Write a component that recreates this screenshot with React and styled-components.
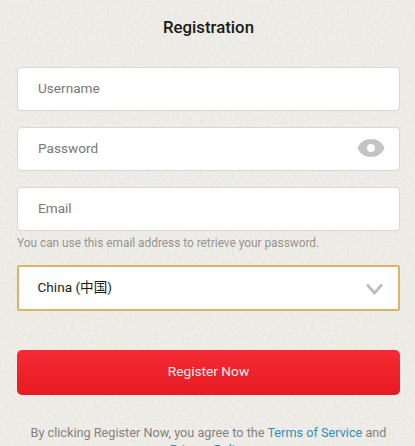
import React from "react";
import styled, { createGlobalStyle } from "styled-components";

const noise = `url("data:image/svg+xml,%3Csvg xmlns='http://www.w3.org/2000/svg' width='240' height='240'%3E%3Cfilter id='n'%3E%3CfeTurbulence type='fractalNoise' baseFrequency='0.4' numOctaves='3' seed='4'/%3E%3CfeColorMatrix values='0 0 0 0 0.55 0 0 0 0 0.53 0 0 0 0 0.48 0 0 0 0.32 -0.1'/%3E%3C/filter%3E%3Crect width='240' height='240' filter='url(%23n)'/%3E%3C/svg%3E")`;

const Global = createGlobalStyle`
  html, body { margin: 0; padding: 0; height: 100%; overflow: hidden; background: #f0eee9; }
  * { box-sizing: border-box; }
`;

const Page = styled.div`
  width: 415px;
  height: 446px;
  overflow: hidden;
  padding: 0 15px 0 17px;
  background-color: #f0eee9;
  background-image: ${noise};
  font-family: Roboto, "Noto Sans CJK SC", sans-serif;
  display: flex;
  flex-direction: column;
`;

const Title = styled.h1`
  margin: 0;
  flex: none;
  height: 67px;
  padding-top: 17px;
  font-size: 16.8px;
  line-height: 21px;
  font-weight: 500;
  color: #1a1a1a;
  text-align: center;
`;

const Field = styled.div`
  height: 44px;
  flex: none;
  display: flex;
  align-items: center;
  justify-content: space-between;
  padding: 0 14px 2px 20px;
  background: #fff;
  border: 1px solid #d8d8ce;
  border-radius: 4px;
  font-size: 13.6px;
  color: #777;
  margin-bottom: ${(p) => p.$gap || 16}px;
`;

const Hint = styled.p`
  margin: 0 0 14px;
  flex: none;
  height: 16px;
  font-size: 11.85px;
  line-height: 16px;
  color: #96948f;
`;

const Select = styled(Field)`
  height: 46px;
  margin-left: -0.5px;
  border: 2px solid #e0b264;
  border-radius: 2px;
  color: #1a1a1a;
  padding: 0 15px 4px 19px;
  margin-bottom: 39px;
`;

const Button = styled.button`
  height: 45px;
  flex: none;
  width: 100%;
  border: 0;
  padding: 0 0 4px;
  border-radius: 5px;
  background: linear-gradient(#f42b35, #e71a22);
  color: #fdeeee;
  font: 400 13.7px Roboto, sans-serif;
`;

const Terms = styled.p`
  margin: 29px 0 0;
  flex: none;
  text-align: center;
  font-size: 12.7px;
  line-height: 17px;
  color: #84827e;
`;

const TermsLink = styled.a`
  color: #2f8fbd;
`;

const ChevronIcon = styled.svg`
  margin-top: 6px;
`;

const Eye = () => (
  <svg width="28" height="18" viewBox="0 0 28 18" aria-hidden="true">
    <path d="M0.500 9C3 3 8 0 14 0S25 3 27.500 9C25 15 20 18 14 18S3 15 0.500 9Z" fill="#c4c4c4" />
    <circle cx="14" cy="9" r="4" fill="#fff" />
  </svg>
);

const Chevron = () => (
  <ChevronIcon width="17" height="12" viewBox="0 0 17 12" aria-hidden="true">
    <path d="M1 1.500L8.500 10L16 1.500" fill="none" stroke="#bdbdbd" strokeWidth="2.800" />
  </ChevronIcon>
);

export default function App() {
  return (
    <Page>
      <Global />
      <Title>Registration</Title>
      <Field>Username</Field>
      <Field>Password<Eye /></Field>
      <Field $gap={4}>Email</Field>
      <Hint>You can use this email address to retrieve your password.</Hint>
      <Select>China (中国)<Chevron /></Select>
      <Button>Register Now</Button>
      <Terms>
        By clicking Register Now, you agree to the <TermsLink>Terms of Service</TermsLink> and{" "}
        <TermsLink>Privacy Policy</TermsLink>
      </Terms>
    </Page>
  );
}
